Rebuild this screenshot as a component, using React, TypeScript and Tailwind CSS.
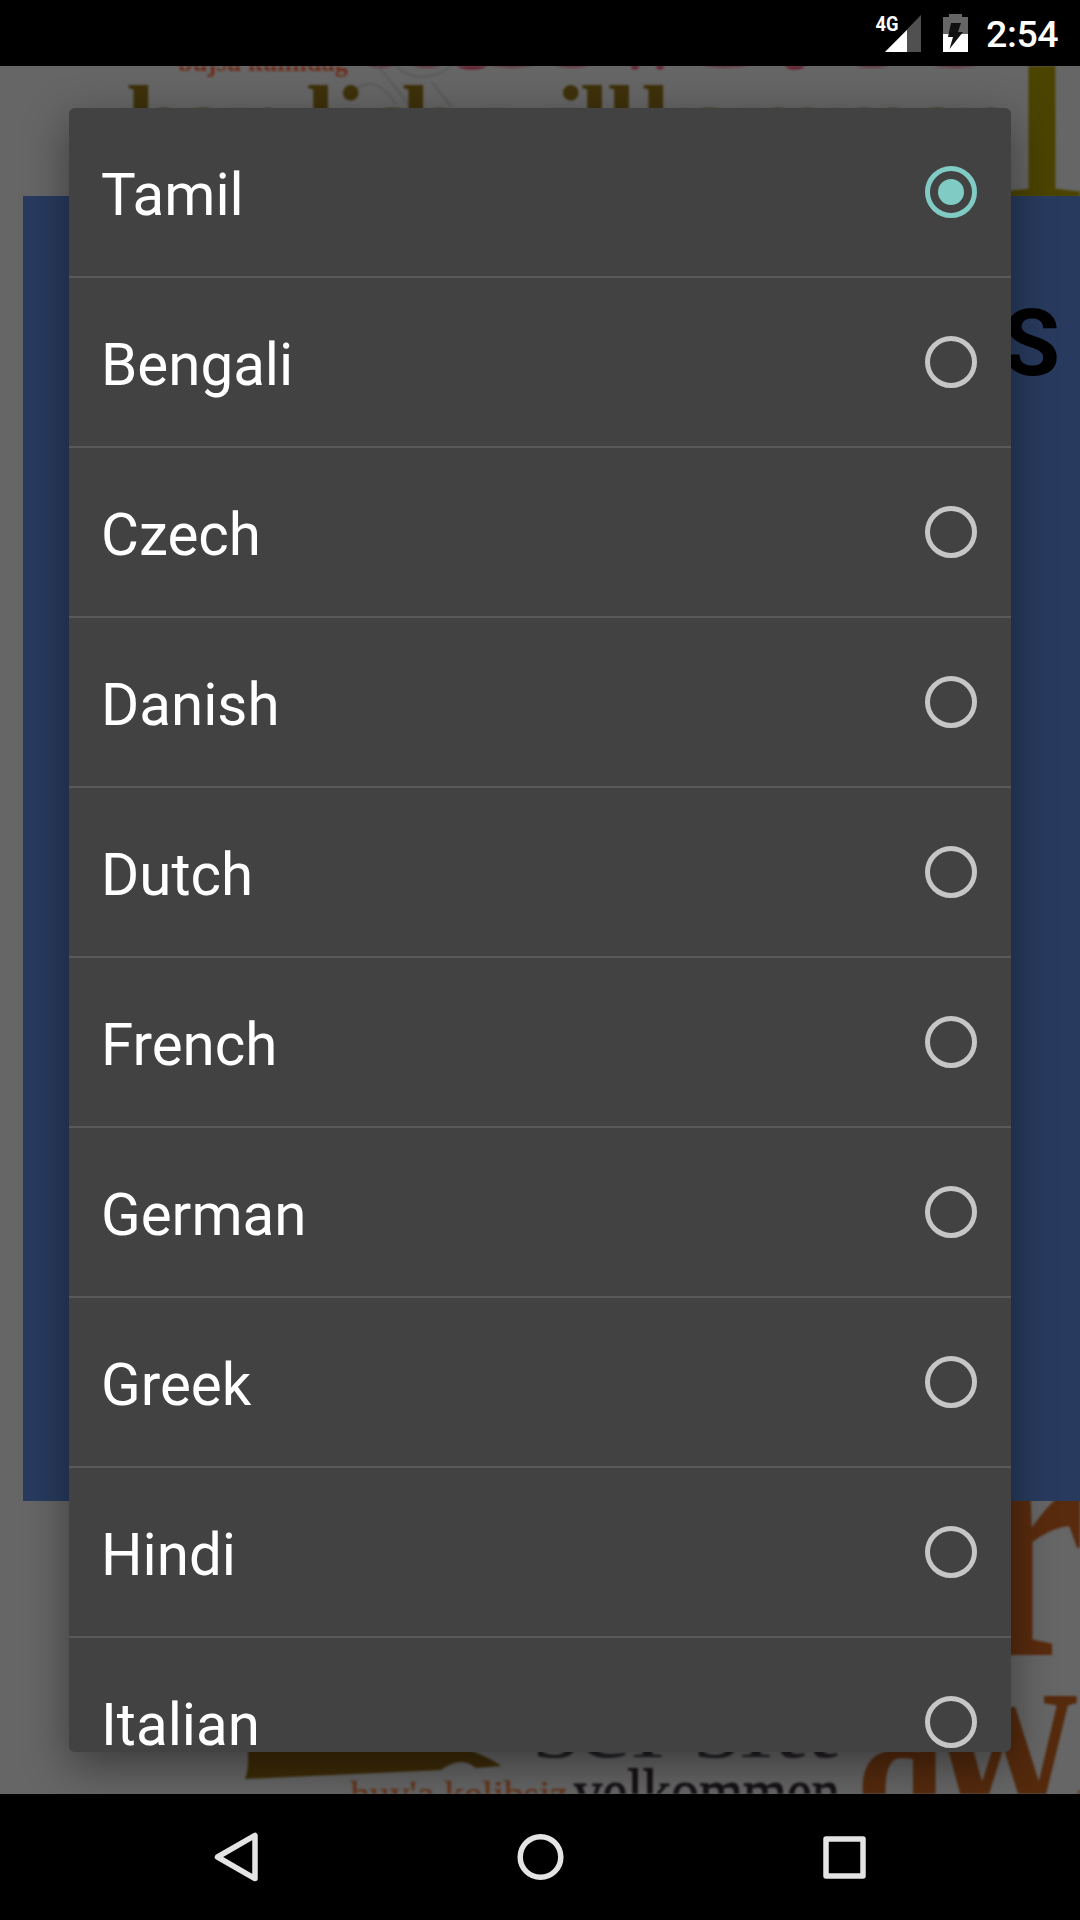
const languages = ["Tamil", "Bengali", "Czech", "Danish", "Dutch", "French", "German", "Greek", "Hindi", "Italian"];

function WordCloud() {
  return (
    <svg
      className="absolute inset-0 h-full w-full blur-[0.8px]"
      viewBox="0 66 1080 1728"
      fontFamily="'Liberation Serif', serif"
      aria-hidden="true"
    >
      <text x="178" y="71" fontSize="30" fill="#6e2e1c" textLength="170" lengthAdjust="spacingAndGlyphs" fontWeight="bold">bujsü kulnidag</text>
      <g fill="#681c2c" transform="translate(0 -0.6)">
        <ellipse cx="380" cy="64" rx="16" ry="4" />
        <ellipse cx="427" cy="64" rx="18" ry="4" />
        <ellipse cx="472" cy="66" rx="15" ry="4" />
        <ellipse cx="512" cy="64" rx="26" ry="4" />
        <ellipse cx="572" cy="64" rx="22" ry="4" />
        <ellipse cx="635" cy="66" rx="4" ry="4" />
        <ellipse cx="660" cy="66" rx="4" ry="4" />
        <ellipse cx="725" cy="64" rx="30" ry="4" />
        <ellipse cx="795" cy="66" rx="10" ry="4" />
        <ellipse cx="872" cy="64" rx="22" ry="4" />
        <ellipse cx="955" cy="64" rx="28" ry="4" />
      </g>
      <g fill="none" stroke="#565858" strokeWidth="1.5">
        <path d="M345 100 Q370 66 396 104 M378 66 L410 106 M395 66 Q420 88 452 66 M432 82 L452 108" />
      </g>
      <g fill="#3e310a" fontSize="104" fontWeight="bold">
        <text y="157" x="126 178 227 262 306 336 364 401">herzlich</text>
        <text y="157" x="486 556 580 607 641 683 740 826 912 952">willkommen</text>
      </g>
      <text x="996" y="197" fontSize="245" fill="#4b4300" textLength="92" lengthAdjust="spacingAndGlyphs">l</text>
      <text x="972" y="1655" fontSize="350" fontWeight="bold" fill="#592b0e" textLength="118" lengthAdjust="spacingAndGlyphs">r</text>
      <g fill="#552a0d">
        <text x="856" y="1826" fontSize="160" fontWeight="bold">q</text>
        <text x="925" y="1824" fontSize="196" textLength="154" lengthAdjust="spacingAndGlyphs" fontWeight="bold">W</text>
        <text x="1071" y="1824" fontSize="160" fontWeight="bold">a</text>
      </g>
      <path d="M248 1745 H450 Q484 1753 501 1766 L476 1768 Q461 1755 441 1770 L245 1779 Q249 1771 248 1745Z" fill="#3d2b08" />
      <text x="350" y="1806" fontSize="36" fill="#65381f" stroke="#65381f" strokeWidth="0.6" textLength="218" lengthAdjust="spacingAndGlyphs">huy'a kelibsiz</text>
      <text x="574" y="1814" fontSize="66" fill="#151115" stroke="#151115" strokeWidth="1" textLength="266" lengthAdjust="spacingAndGlyphs">velkommen</text>
      <text x="533" y="1757" fontSize="80" fill="#211e22" textLength="305" lengthAdjust="spacingAndGlyphs">sel sitt</text>
    </svg>
  );
}

function StatusBar() {
  return (
    <header className="flex h-[66px] items-start justify-end bg-black pr-[20px] text-white">
      <svg className="h-[66px] w-[116px]" viewBox="870 0 116 66" aria-hidden="true">
        <path d="M885 52 L921 15 V52Z" fill="#505050" />
        <path d="M885 52 L907 30 V52Z" fill="#fff" />
        <text x="875.5" y="31" fill="#fff" fontFamily="Roboto" fontWeight="700" fontSize="21" textLength="23" lengthAdjust="spacingAndGlyphs">4G</text>
        <path d="M943 17 H949 V14 H962 V17 H968 V35 H943Z" fill="#666" />
        <path d="M943 34 H968 V52 H943Z" fill="#fff" />
        <path d="M951 23 H961 L958 32 H963 L949.5 49 L953 37 H948Z" fill="#111" />
      </svg>
      <time className="w-[74px] pt-[13px] text-[37.5px] leading-[42px] font-medium tracking-[-0.4px] whitespace-nowrap">2:54</time>
    </header>
  );
}

function Radio({ checked }: { checked: boolean }) {
  return (
    <span className={checked
      ? "flex size-[52px] items-center justify-center rounded-full border-[5px] border-[#80cbc4]"
      : "flex size-[52px] items-center justify-center rounded-full border-[5px] border-[#c6c6c6]"}>
      {checked && <span className="size-[26px] rounded-full bg-[#80cbc4]" />}
    </span>
  );
}

export default function App() {
  return (
    <div className="flex h-[1920px] w-[1080px] flex-col overflow-hidden bg-black font-[Roboto]">
      <StatusBar />
      <main className="relative h-[1728px] overflow-hidden bg-[#666] pt-[130px] pl-[23.4px]">
        <WordCloud />
        <section className="relative flex h-[1305px] justify-end bg-[#283b5f] pt-[102px] pr-[20px]">
          <h1 className="text-[93px] leading-[92px] font-bold text-black">S</h1>
        </section>
        <div
          role="dialog"
          className="absolute top-[42px] left-[69px] h-[1644px] w-[942px] overflow-hidden rounded-[6px] bg-[#424242] shadow-[0_14px_46px_rgba(0,0,0,0.42)]"
        >
          <ul>
            {languages.map((name, i) => (
              <li key={name} className="flex h-[170px] items-center justify-between border-b-2 border-[#5a5a5a] pr-[34px] pl-8">
                <span className="pt-[6px] text-[58.3px] leading-[70px] text-white">{name}</span>
                <Radio checked={i === 0} />
              </li>
            ))}
          </ul>
        </div>
      </main>
      <nav className="flex h-[126px] bg-black">
        <svg className="h-[126px] w-full" viewBox="0 1794 1080 126" fill="none" stroke="#e4e4e4" strokeWidth="5.5" strokeLinejoin="round" aria-label="Navigation">
          <path d="M217.5 1857 L255 1835.5 V1878.5Z" />
          <circle cx="540.5" cy="1857" r="20.3" />
          <rect x="826" y="1839" width="37" height="37" />
        </svg>
      </nav>
    </div>
  );
}
